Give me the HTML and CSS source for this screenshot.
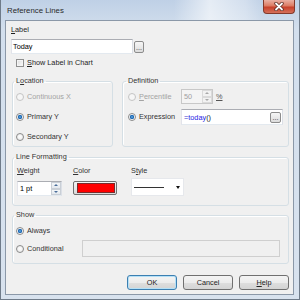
FILE: index.html
```html
<!DOCTYPE html>
<html lang="en">
<head>
  <meta charset="UTF-8" />
  <title>Reference Lines</title>
  <link rel="stylesheet" href="styles.css">
</head>
<body>
  <div class="window">
    <!-- Title bar -->
    <div class="titlebar">
      <span class="title">Reference Lines</span>
      <div class="close">
        <svg width="12" height="9" viewBox="0 0 12 9">
          <path d="M3 1.5 L9 7.5 M9 1.5 L3 7.5" stroke="#5a2a22" stroke-width="3.4" stroke-linecap="round"/>
          <path d="M3 1.5 L9 7.5 M9 1.5 L3 7.5" stroke="#ffffff" stroke-width="1.8" stroke-linecap="round"/>
        </svg>
      </div>
    </div>

    <div class="client">
      <div class="field-label"><u>L</u>abel</div>
      <div class="text-row">
        <div class="textbox label-box">Today</div>
        <div class="dots">...</div>
      </div>
      <div class="check-row">
        <span class="checkbox"></span>
        <span><u>S</u>how Label in Chart</span>
      </div>

      <div class="group-row">
        <fieldset class="group location">
          <legend>L<u>o</u>cation</legend>
          <div class="option disabled"><span class="radio"></span>Continuous X</div>
          <div class="option"><span class="radio on"></span>Primary Y</div>
          <div class="option"><span class="radio"></span>Secondary Y</div>
        </fieldset>
        <fieldset class="group definition">
          <legend>Definition</legend>
          <div class="option disabled">
            <span class="radio"></span>
            <span class="opt-text"><u>P</u>ercentile</span>
            <div class="spin spin-pct">
              <span class="spin-value">50</span>
              <span class="spin-btns"><span class="up"></span><span class="down"></span></span>
            </div>
            <span class="pct"><u>%</u></span>
          </div>
          <div class="option expr-row">
            <span class="radio on"></span>
            <span class="opt-text">Expression</span>
            <div class="textbox expr-box">
              <span class="expr"><span class="eq">=</span><span class="fn">today</span>()</span>
              <div class="dots small">...</div>
            </div>
          </div>
        </fieldset>
      </div>

      <fieldset class="group formatting">
        <legend>Line Formatting</legend>
        <div class="format-row">
          <div class="format-col">
            <div class="col-label"><u>W</u>eight</div>
            <div class="spin spin-weight">
              <span class="spin-value">1 pt</span>
              <span class="spin-btns"><span class="up"></span><span class="down"></span></span>
            </div>
          </div>
          <div class="format-col">
            <div class="col-label"><u>C</u>olor</div>
            <div class="color-btn"><span class="swatch"></span></div>
          </div>
          <div class="format-col style-col">
            <div class="col-label">S<u>t</u>yle</div>
            <div class="dropdown"><span class="line-sample"></span><span class="caret"></span></div>
          </div>
        </div>
      </fieldset>

      <fieldset class="group show">
        <legend>Show</legend>
        <div class="option always"><span class="radio on"></span>Always</div>
        <div class="option cond-row">
          <span class="radio"></span>
          <span class="cond-text">Conditional</span>
          <div class="textbox cond-box"></div>
        </div>
      </fieldset>

      <div class="buttons">
        <div class="btn default">OK</div>
        <div class="btn">Cancel</div>
        <div class="btn"><u>H</u>elp</div>
      </div>
    </div>
  </div>
</body>
</html>
```

FILE: styles.css
```css
* {
  box-sizing: border-box;
}

body {
  margin: 0;
  font-family: "Liberation Sans", Arial, sans-serif;
  font-size: 7.3px;
  line-height: 10px;
  color: #1e1e1e;
}

u {
  text-decoration: underline;
  text-underline-offset: 1px;
}

.window {
  width: 300px;
  height: 300px;
  display: flex;
  flex-direction: column;
  background: linear-gradient(180deg, #bfd0e6 0%, #d3dfed 10%, #d8e2ee 100%);
  border: 1px solid #6f7b89;
  border-top: none;
}

.titlebar {
  height: 20px;
  flex: none;
  display: flex;
  align-items: flex-start;
  background: linear-gradient(90deg, rgba(255,255,255,0) 58%, rgba(255,255,255,0.6) 70%, rgba(255,255,255,0.3) 82%, rgba(255,255,255,0) 88%);
}

.title {
  margin: 6px 0 0 6px;
  font-size: 7.8px;
  color: #2a2a2a;
}

.close {
  margin-left: auto;
  margin-right: 4px;
  width: 32px;
  height: 14px;
  border: 1px solid #83392b;
  border-top: none;
  border-radius: 0 0 4px 4px;
  background: linear-gradient(180deg, #eab0a3 0%, #dc7b63 45%, #c8402a 55%, #d4705a 100%);
  display: flex;
  align-items: center;
  justify-content: center;
}

.client {
  margin: 0 5px 0 4px;
  height: 275px;
  flex: none;
  background: #f0f0f0;
  border: 1px solid #8b98a8;
  padding: 4px 4px 0 5px;
  display: flex;
  flex-direction: column;
}

.field-label {
  height: 10px;
}

.text-row {
  margin-top: 4px;
  display: flex;
  align-items: center;
}

.textbox {
  height: 15px;
  background: #fff;
  border: 1px solid;
  border-color: #abadb3 #dbdfe6 #e3e9ef #e2e3ea;
  padding: 0 1px;
  line-height: 13px;
  color: #000;
}

.label-box {
  width: 122px;
}

.dots {
  width: 10px;
  height: 12px;
  margin-left: 1px;
  border: 1px solid #8c8c8c;
  border-radius: 2px;
  background: linear-gradient(#f6f6f6, #dcdcdc);
  font-size: 7px;
  line-height: 11px;
  text-align: center;
  color: #333;
}

.check-row {
  margin-top: 4px;
  height: 10px;
  display: flex;
  align-items: center;
}

.checkbox {
  width: 8px;
  height: 8px;
  margin: 0 3px 0 5px;
  border: 1px solid #8f8f8f;
  background: linear-gradient(135deg, #dcdcdc, #fafafa);
  box-shadow: inset 0 0 0 1px #f4f4f4;
}

/* group boxes */
.group {
  margin: 0;
  min-width: 0;
  border: 1px solid #d5dfe5;
  border-radius: 3px;
  box-shadow: inset 1px 1px 0 #fff;
}

.group legend {
  padding: 0 2px;
  margin-left: -2px;
  line-height: 10px;
  color: #333;
}

.group-row {
  margin: 8px 0 0 1px;
  display: flex;
  gap: 9px;
}

.location {
  width: 101px;
  padding: 3px 3px 2px 3px;
  display: flex;
  flex-direction: column;
  gap: 5px;
}

.definition {
  width: 167px;
  padding: 3px 3px 2px 5px;
  display: flex;
  flex-direction: column;
  gap: 5px;
}

.option {
  height: 15px;
  display: flex;
  align-items: center;
  color: #333;
}

.option.disabled {
  color: #a3a3a3;
}

.radio {
  width: 8px;
  height: 8px;
  flex: none;
  margin-right: 3px;
  border-radius: 50%;
  border: 1px solid #8a8a8a;
  background: radial-gradient(circle at 50% 45%, #ffffff 0, #e4e4e4 100%);
}

.radio.on {
  background: radial-gradient(circle at 50% 50%, #62aeea 0, #1c64ad 1.8px, #ffffff 2.6px, #e2e2e2 100%);
}

.disabled .radio {
  border-color: #c4c4c4;
  background: #f6f6f6;
}

.opt-text {
  width: 42px;
  flex: none;
}

.expr-row {
  height: 16px;
}

.spin {
  height: 15px;
  display: flex;
  background: #fff;
  border: 1px solid;
  border-color: #abadb3 #dbdfe6 #e3e9ef #e2e3ea;
  color: #000;
}

.spin-value {
  flex: 1;
  padding-left: 2px;
  line-height: 13px;
}

.spin-btns {
  width: 10px;
  display: flex;
  flex-direction: column;
}

.spin-btns span {
  flex: 1;
  border: 1px solid #c9cfd6;
  background: linear-gradient(#f4f6f8, #e3e8ee);
  display: flex;
  align-items: center;
  justify-content: center;
}

.spin-btns .up::after {
  content: "";
  border-left: 2px solid transparent;
  border-right: 2px solid transparent;
  border-bottom: 2px solid #4b6e9a;
}

.spin-btns .down::after {
  content: "";
  border-left: 2px solid transparent;
  border-right: 2px solid transparent;
  border-top: 2px solid #4b6e9a;
}

.spin-pct {
  width: 32px;
  background: #f4f4f4;
  border-color: #c8c8c8;
  color: #a0a0a0;
}

.spin-pct .spin-btns span {
  border-color: #dadada;
  background: #f2f2f2;
}

.spin-pct .spin-btns .up::after {
  border-bottom-color: #a8a8a8;
}

.spin-pct .spin-btns .down::after {
  border-top-color: #a8a8a8;
}

.pct {
  margin-left: 3px;
  color: #555;
}

.expr-box {
  width: 102px;
  height: 16px;
  display: flex;
  align-items: center;
  padding: 0 1px 0 2px;
}

.expr {
  flex: 1;
  color: #222;
}

.expr .eq {
  color: #3a3ad0;
}

.expr .fn {
  color: #2323e6;
}

.dots.small {
  width: 11px;
  height: 11px;
  line-height: 10px;
}

/* line formatting */
.formatting {
  margin-top: 5px;
  margin-left: 1px;
  padding: 4px 3px 9px 4px;
}

.formatting legend {
  margin-left: -3px;
}

.format-row {
  display: flex;
  gap: 11px;
}

.format-col {
  display: flex;
  flex-direction: column;
  gap: 5px;
}

.style-col {
  margin-left: 3px;
  gap: 2px;
}

.col-label {
  height: 10px;
  color: #333;
}

.spin-weight {
  width: 45px;
}

.color-btn {
  width: 44px;
  height: 14px;
  border: 1px solid #707070;
  border-radius: 2px;
  background: linear-gradient(#f3f3f3, #dadada);
  padding: 1px 0 0 3px;
}

.swatch {
  display: block;
  width: 38px;
  height: 10px;
  background: #ff0000;
  border: 1px solid #7a2a2a;
}

.dropdown {
  width: 53px;
  height: 18px;
  background: #fff;
  border: 1px solid #e6e8ec;
  display: flex;
  align-items: center;
  padding: 0 3px 0 2px;
}

.line-sample {
  width: 30px;
  height: 1px;
  background: #333;
}

.caret {
  margin-left: auto;
  border-left: 2.5px solid transparent;
  border-right: 2.5px solid transparent;
  border-top: 3px solid #111;
}

/* show */
.show {
  margin-top: 4px;
  margin-left: 1px;
  padding: 4px 3px 6px 3px;
}

.always {
  height: 14px;
}

.cond-row {
  margin-top: 2px;
  height: 17px;
}

.cond-text {
  width: 55px;
}

.cond-box {
  width: 198px;
  height: 17px;
  background: #f0f0f0;
  border-color: #cfcfcf;
}

/* buttons */
.buttons {
  margin-top: 11px;
  display: flex;
  justify-content: flex-end;
  gap: 6px;
}

.btn {
  width: 50px;
  height: 15px;
  border: 1px solid #707070;
  border-radius: 3px;
  background: linear-gradient(180deg, #f4f4f4 0%, #ececec 50%, #dedede 51%, #d4d4d4 100%);
  text-align: center;
  line-height: 13px;
  color: #222;
}

.btn.default {
  border-color: #3c7fb1;
  box-shadow: inset 0 0 0 1px #b4e0f7;
}
```
